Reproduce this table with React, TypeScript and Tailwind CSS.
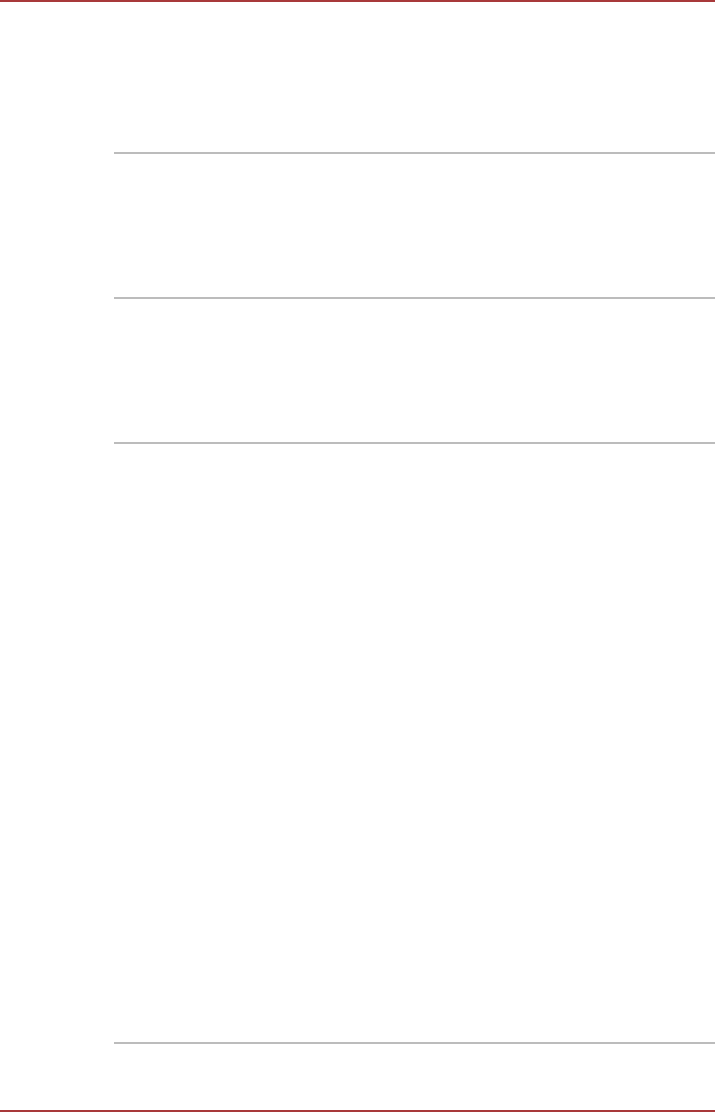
export default function App() {
  const rows = ['h-[145px]', 'h-[145px]', 'h-[600px]'];

  return (
    <div className="flex h-[1113px] w-[715px] flex-col bg-white">
      <div className="h-[2px] w-full bg-[#a8393a]" />
      <main className="flex-1 pl-[114px] pt-[150px]">
        {rows.map((h, i) => (
          <section key={i} className={`${h} border-t-2 border-[#bcbcbc]`} />
        ))}
        <div className="border-t-2 border-[#bcbcbc]" />
      </main>
      <div className="mb-px h-[2px] w-full bg-[#a8393a]" />
    </div>
  );
}
